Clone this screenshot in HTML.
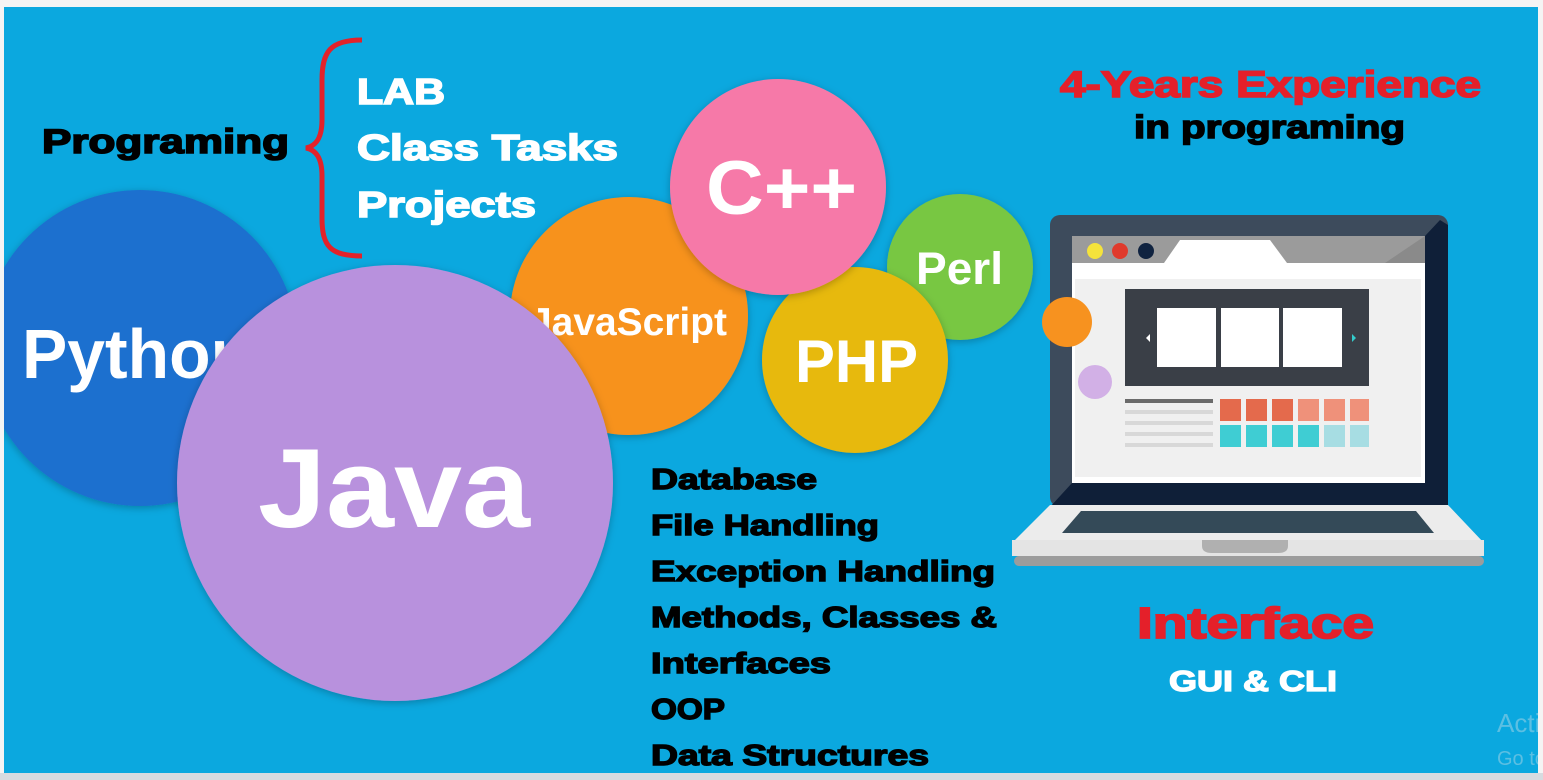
<!DOCTYPE html>
<html><head><meta charset="utf-8"><style>
html,body{margin:0;padding:0;background:#f3f3f3;width:1543px;height:780px;overflow:hidden}
svg{display:block}
</style></head><body>
<svg width="1543" height="780" viewBox="0 0 1543 780" xmlns="http://www.w3.org/2000/svg" font-family="Liberation Sans, Arial, sans-serif" font-weight="bold">
<defs>
<filter id="sh" x="-20%" y="-20%" width="140%" height="140%"><feDropShadow dx="0" dy="2" stdDeviation="4" flood-color="#000" flood-opacity="0.25"/></filter>
<clipPath id="cl"><rect x="4" y="7" width="1534" height="766"/></clipPath>
</defs>
<rect width="1543" height="780" fill="#f4f4f4"/>
<rect x="0" y="773" width="1543" height="7" fill="#d6dbe0"/>
<rect x="4" y="7" width="1534" height="766" fill="#0ba8df"/>
<g clip-path="url(#cl)">
<!-- Python -->
<circle cx="140" cy="348" r="158" fill="#1c6fcf" filter="url(#sh)"/>
<text x="22" y="378" font-size="70" fill="#fff" textLength="230" lengthAdjust="spacingAndGlyphs">Python</text>
<!-- JavaScript -->
<circle cx="629" cy="316" r="119" fill="#f7921f" filter="url(#sh)"/>
<text x="530" y="335" font-size="39" fill="#fff" textLength="197" lengthAdjust="spacingAndGlyphs">JavaScript</text>
<!-- Java -->
<circle cx="395" cy="483" r="218" fill="#b891dd" filter="url(#sh)"/>
<text x="258" y="527" font-size="112" fill="#fff" textLength="272" lengthAdjust="spacingAndGlyphs">Java</text>
<!-- Perl -->
<circle cx="960" cy="267" r="73" fill="#78c743" filter="url(#sh)"/>
<text x="916" y="284" font-size="45" fill="#fff" textLength="87" lengthAdjust="spacingAndGlyphs">Perl</text>
<!-- PHP -->
<circle cx="855" cy="360" r="93" fill="#e7b90f" filter="url(#sh)"/>
<text x="795" y="382" font-size="60" fill="#fff" textLength="123" lengthAdjust="spacingAndGlyphs">PHP</text>
<!-- C++ -->
<circle cx="778" cy="187" r="108" fill="#f679a8" filter="url(#sh)"/>
<text x="706" y="214" font-size="76" fill="#fff" textLength="151" lengthAdjust="spacingAndGlyphs">C++</text>

<!-- Brace -->
<path d="M362 40 C330 40 322 52 322 80 L322 120 C322 138 316 146 306 148 C316 150 322 158 322 176 L322 218 C322 246 330 256 362 256" fill="none" stroke="#e3222a" stroke-width="5"/>

<text x="42" y="153" font-size="34" fill="#000" stroke="#000" stroke-width="1.6" textLength="247" lengthAdjust="spacingAndGlyphs">Programing</text>
<g fill="#fff" stroke="#fff" stroke-width="1.6" font-size="36">
<text x="357" y="104" textLength="88" lengthAdjust="spacingAndGlyphs">LAB</text>
<text x="357" y="160" textLength="261" lengthAdjust="spacingAndGlyphs">Class Tasks</text>
<text x="357" y="217" textLength="179" lengthAdjust="spacingAndGlyphs">Projects</text>
</g>
<g fill="#000" stroke="#000" stroke-width="1.4" font-size="29">
<text x="651" y="489" textLength="166" lengthAdjust="spacingAndGlyphs">Database</text>
<text x="651" y="535" textLength="228" lengthAdjust="spacingAndGlyphs">File Handling</text>
<text x="651" y="581" textLength="344" lengthAdjust="spacingAndGlyphs">Exception Handling</text>
<text x="651" y="627" textLength="346" lengthAdjust="spacingAndGlyphs">Methods, Classes &amp;</text>
<text x="651" y="673" textLength="180" lengthAdjust="spacingAndGlyphs">Interfaces</text>
<text x="651" y="719" textLength="74" lengthAdjust="spacingAndGlyphs">OOP</text>
<text x="651" y="765" textLength="278" lengthAdjust="spacingAndGlyphs">Data Structures</text>
</g>
<text x="1060" y="97" font-size="37" fill="#e4202a" stroke="#e4202a" stroke-width="1.6" textLength="421" lengthAdjust="spacingAndGlyphs">4-Years Experience</text>
<text x="1134" y="138" font-size="32" fill="#000" stroke="#000" stroke-width="1.5" textLength="271" lengthAdjust="spacingAndGlyphs">in programing</text>
<text x="1137" y="638" font-size="44" fill="#e4202a" stroke="#e4202a" stroke-width="1.8" textLength="237" lengthAdjust="spacingAndGlyphs">Interface</text>
<text x="1169" y="691" font-size="29" fill="#fff" stroke="#fff" stroke-width="1.3" textLength="168" lengthAdjust="spacingAndGlyphs">GUI &amp; CLI</text>

<!-- Laptop -->
<rect x="1050" y="215" width="398" height="292" rx="10" fill="#3d4b5c"/>
<path d="M1448 225 L1448 507 L1050 507 L1072 483 L1425 483 L1425 236 L1440 220 Z" fill="#0f1f38"/>
<rect x="1072" y="236" width="353" height="247" fill="#fff"/>
<rect x="1072" y="236" width="353" height="27" fill="#9b9b9b"/>
<path d="M1164 263 L1180 240 L1270 240 L1287 263 Z" fill="#fff"/>
<path d="M1385 263 L1425 236 L1425 263 Z" fill="#8a8a8a"/>
<circle cx="1095" cy="251" r="8" fill="#f5e33b"/>
<circle cx="1120" cy="251" r="8" fill="#e03a2c"/>
<circle cx="1146" cy="251" r="8" fill="#102340"/>
<rect x="1075" y="279" width="346" height="198" fill="#f0f0f0"/>
<rect x="1125" y="289" width="244" height="97" fill="#3a3f47"/>
<rect x="1157" y="308" width="59" height="59" fill="#fff"/>
<rect x="1221" y="308" width="58" height="59" fill="#fff"/>
<rect x="1283" y="308" width="59" height="59" fill="#fff"/>
<path d="M1146 338 L1150 334 L1150 342 Z" fill="#fff"/>
<path d="M1352 334 L1356 338 L1352 342 Z" fill="#3cc"/>
<rect x="1125" y="399" width="88" height="4" fill="#6b6b6b"/>
<rect x="1125" y="410" width="88" height="4" fill="#d8d8d8"/>
<rect x="1125" y="421" width="88" height="4" fill="#d8d8d8"/>
<rect x="1125" y="432" width="88" height="4" fill="#d8d8d8"/>
<rect x="1125" y="443" width="88" height="4" fill="#d8d8d8"/>
<g>
<rect x="1220" y="399" width="21" height="22" fill="#e46a4c"/><rect x="1246" y="399" width="21" height="22" fill="#e46a4c"/><rect x="1272" y="399" width="21" height="22" fill="#e46a4c"/><rect x="1298" y="399" width="21" height="22" fill="#ef917a"/><rect x="1324" y="399" width="21" height="22" fill="#ef917a"/><rect x="1350" y="399" width="19" height="22" fill="#ef917a"/>
<rect x="1220" y="425" width="21" height="22" fill="#3fcdd3"/><rect x="1246" y="425" width="21" height="22" fill="#3fcdd3"/><rect x="1272" y="425" width="21" height="22" fill="#3fcdd3"/><rect x="1298" y="425" width="21" height="22" fill="#3fcdd3"/><rect x="1324" y="425" width="21" height="22" fill="#a7dde3"/><rect x="1350" y="425" width="19" height="22" fill="#a7dde3"/>
</g>
<circle cx="1067" cy="322" r="25" fill="#f7921f"/>
<circle cx="1095" cy="382" r="17" fill="#d2b0e6"/>
<path d="M1050 505 L1448 505 L1484 543 L1484 555 L1012 555 L1012 543 Z" fill="#ececec"/>
<path d="M1081 511 L1416 511 L1434 533 L1062 533 Z" fill="#344a58"/>
<rect x="1012" y="540" width="472" height="16" fill="#e4e4e4"/>
<path d="M1202 540 L1288 540 L1288 546 Q1288 553 1278 553 L1212 553 Q1202 553 1202 546 Z" fill="#b0b0b0"/>
<rect x="1014" y="556" width="470" height="10" rx="5" fill="#9c9c9c"/>

<text x="1497" y="732" font-size="26" font-weight="normal" fill="#5cbfe2">Acti</text>
<text x="1497" y="765" font-size="20" font-weight="normal" fill="#5cbfe2">Go to</text>
</g>
</svg>
</body></html>
